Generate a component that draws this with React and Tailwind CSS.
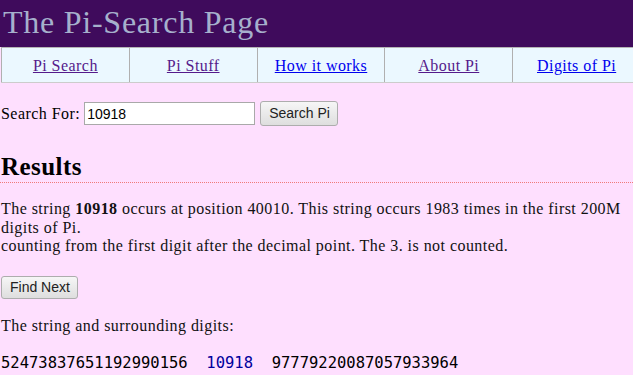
const NAV = [
  { label: 'Pi Search', visited: true },
  { label: 'Pi Stuff', visited: true },
  { label: 'How it works', visited: false },
  { label: 'About Pi', visited: true },
  { label: 'Digits of Pi', visited: false },
]

const serif = "font-['Liberation_Serif','Times_New_Roman',serif]"
const sans = "font-['Liberation_Sans',Arial,sans-serif]"

function OldButton({ children, width }) {
  return (
    <button
      type="button"
      className={`${sans} ${width} h-full shrink-0 whitespace-nowrap px-[8px] text-[14px] tracking-normal text-[#222] rounded-[3px] border border-[#adadad] bg-gradient-to-b from-[#f6f6f6] to-[#dedede]`}
    >
      {children}
    </button>
  )
}

export default function App() {
  return (
    <div className={`${serif} w-full min-h-screen overflow-hidden bg-[#fedffe] text-[16px] tracking-[0.45px] text-black`}>
      <header className="h-[47px] bg-[#3f0b5c] px-[3px]">
        <h1 className={`${serif} text-[32px] tracking-[0.75px] leading-[45px] font-normal text-[#a6b0cc] whitespace-nowrap`}>
          The Pi-Search Page
        </h1>
      </header>

      <nav className="w-[639px] ml-[1px] h-[36px] grid grid-cols-5 bg-[#ebf8ff] border-t border-b border-t-[#b5b5b5] border-b-[#cccccc]">
        {NAV.map((item) => (
          <div key={item.label} className="border-l border-[#b0b0b0] text-center pt-[2px] leading-[32px] whitespace-nowrap">
            <a
              href="#"
              className={`underline ${item.visited ? 'text-[#551a8b]' : 'text-[#0000ee]'}`}
            >
              {item.label}
            </a>
          </div>
        ))}
      </nav>

      <div className="mt-[18px] h-[25px] flex items-center pl-[1px]">
        <span className="whitespace-nowrap">Search For:</span>
        <input
          type="text"
          defaultValue="10918"
          className={`${sans} ml-[4px] w-[171px] h-[23px] shrink-0 bg-white border border-[#a9a9a9] px-[2px] text-[14px] tracking-normal text-black outline-none`}
        />
        <div className="ml-[5px] h-[25px] flex">
          <OldButton width="w-[78px]">Search Pi</OldButton>
        </div>
      </div>

      <h2 className="mt-[26px] text-[25px] leading-[30px] font-bold pl-[1px] border-b border-dotted border-[#f07a7a]">
        Results
      </h2>

      <p className="mt-[17px] leading-[18.5px] pl-[1px] text-[#111]">
        The string <b>10918</b> occurs at position 40010. This string occurs 1983 times in the first 200M digits of Pi.
        <br />
        counting from the first digit after the decimal point. The 3. is not counted.
      </p>

      <div className="mt-[20.5px] h-[23px] flex pl-[1px]">
        <OldButton width="w-[77px]">Find Next</OldButton>
      </div>

      <p className="mt-[18px] leading-[18.5px] pl-[1px] text-[#111]">The string and surrounding digits:</p>

      <p className="mt-[18px] leading-[18.5px] pl-[1px] font-['DejaVu_Sans_Mono',monospace] text-[15.5px] tracking-normal whitespace-pre text-black">
        {'52473837651192990156  '}
        <span className="text-[#00009c]">10918</span>
        {'  97779220087057933964'}
      </p>
    </div>
  )
}
